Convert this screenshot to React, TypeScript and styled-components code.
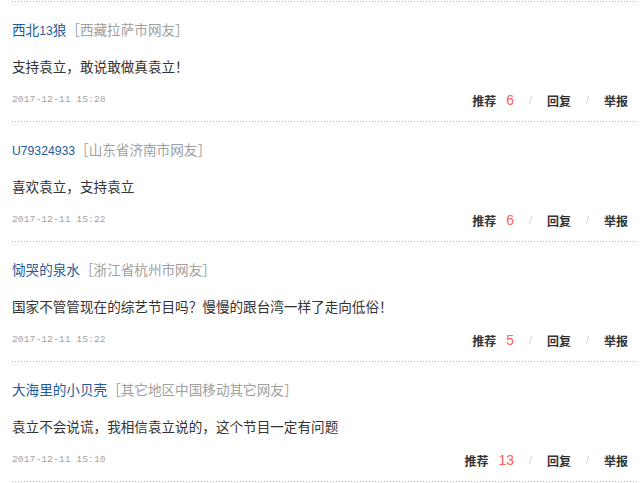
import React from "react";
import styled, { createGlobalStyle } from "styled-components";

const Global = createGlobalStyle`
  html, body { margin: 0; padding: 0; background: #fff; }
  body { font-family: "Liberation Sans", "Noto Sans CJK SC", sans-serif; }
`;

const List = styled.div`
  width: 640px;
  padding: 0 2px 0 12px;
  box-sizing: border-box;
`;

const dotted = `
  background-image: repeating-linear-gradient(to right, #b8b8b8 0 1px, transparent 1px 3px);
  background-size: 100% 1px;
  background-repeat: no-repeat;
`;

const TopRule = styled.div`
  height: 1px;
  margin-top: 1px;
  ${dotted}
`;

const Item = styled.div`
  padding-top: 17px;
  &::after {
    content: "";
    display: block;
    height: 1px;
    margin-top: 11px;
    ${dotted}
  }
`;

const Head = styled.div`
  display: flex;
  align-items: center;
  height: 20px;
  font-size: 13.6px;
  font-family: "Noto Sans CJK SC", sans-serif;
`;

const Name = styled.span`
  color: #245a98;
`;

const Latin = styled.span`
  font-family: "Liberation Sans", sans-serif;
  font-size: 12.2px;
`;

const Loc = styled.span`
  color: #a0a0a0;
`;

const Content = styled.div`
  margin-top: 17px;
  height: 20px;
  line-height: 20px;
  font-size: 13.6px;
  color: #333;
  font-family: "Noto Sans CJK SC", sans-serif;
`;

const Meta = styled.div`
  margin-top: 14px;
  height: 20px;
  display: flex;
  align-items: center;
  justify-content: space-between;
  padding-right: 10px;
`;

const Time = styled.span`
  font-family: "Liberation Mono", monospace;
  font-size: 9.75px;
  color: #a6a6a6;
  margin-top: -2px;
`;

const Actions = styled.div`
  display: flex;
  align-items: center;
`;

const Act = styled.span`
  font-family: "Noto Sans CJK SC", sans-serif;
  font-size: 12px;
  font-weight: 700;
  color: #333;
`;

const Count = styled.span`
  margin-left: 10px;
  font-family: "Liberation Sans", sans-serif;
  font-size: 14px;
  color: #ff6060;
`;

const Sep = styled.span`
  margin: 0 14px;
  font-family: "Liberation Sans", sans-serif;
  font-size: 11px;
  color: #cfcfcf;
  width: 5px;
  text-align: center;
`;

const data = [
  { name: "西北13狼", loc: "西藏拉萨市网友", text: "支持袁立，敢说敢做真袁立！", time: "2017-12-11 15:28", n: 6 },
  { name: "U79324933", loc: "山东省济南市网友", text: "喜欢袁立，支持袁立", time: "2017-12-11 15:22", n: 6 },
  { name: "恸哭的泉水", loc: "浙江省杭州市网友", text: "国家不管管现在的综艺节目吗？慢慢的跟台湾一样了走向低俗！", time: "2017-12-11 15:22", n: 5 },
  { name: "大海里的小贝壳", loc: "其它地区中国移动其它网友", text: "袁立不会说谎，我相信袁立说的，这个节目一定有问题", time: "2017-12-11 15:10", n: 13 },
];

function renderName(s: string) {
  const parts = s.match(/[\x00-\x7f]+|[^\x00-\x7f]+/g) || [];
  return parts.map((p, i) =>
    /^[\x00-\x7f]+$/.test(p) ? <Latin key={i}>{p}</Latin> : <React.Fragment key={i}>{p}</React.Fragment>
  );
}

export default function App() {
  return (
    <>
      <Global />
      <List>
        <TopRule />
        {data.map((d, i) => (
          <Item key={i}>
            <Head>
              <Name>{renderName(d.name)}</Name>
              <Loc>［{d.loc}］</Loc>
            </Head>
            <Content>{d.text}</Content>
            <Meta>
              <Time>{d.time}</Time>
              <Actions>
                <Act>推荐</Act>
                <Count>{d.n}</Count>
                <Sep>/</Sep>
                <Act>回复</Act>
                <Sep>/</Sep>
                <Act>举报</Act>
              </Actions>
            </Meta>
          </Item>
        ))}
      </List>
    </>
  );
}
